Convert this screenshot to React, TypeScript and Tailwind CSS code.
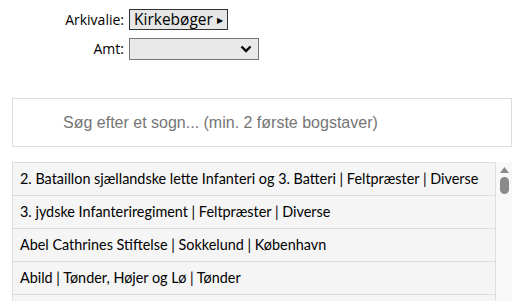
import React from 'react';

const rows = [
  '2. Bataillon sjællandske lette Infanteri og 3. Batteri | Feltpræster | Diverse',
  '3. jydske Infanteriregiment | Feltpræster | Diverse',
  'Abel Cathrines Stiftelse | Sokkelund | København',
  'Abild | Tønder, Højer og Lø | Tønder',
];

export default function App() {
  return (
    <div className="w-[521px] h-[301px] overflow-hidden bg-white font-['Open_Sans',sans-serif] text-black">
      {/* filters */}
      <div className="pt-[9px] grid grid-cols-[129px_auto] items-center gap-y-[8px]">
        <span className="text-right pr-[5px] text-[14px] leading-none">Arkivalie:</span>
        <div>
          <button className="h-[21px] px-[4px] flex items-center gap-[4px] bg-[#e6e6e6] border border-[#333] text-[15.5px] leading-none">
            Kirkebøger
            <span className="text-[8px]">▶</span>
          </button>
        </div>
        <span className="text-right pr-[5px] text-[14px] leading-none">Amt:</span>
        <div>
          <div className="w-[130px] h-[22px] bg-[#e9e9e9] border border-[#767676] flex items-center justify-end pr-[6px]">
            <svg width="12" height="8" viewBox="0 0 12 8">
              <path d="M1.5 1.5 L6 6 L10.5 1.5" fill="none" stroke="#000" strokeWidth="2.4" />
            </svg>
          </div>
        </div>
      </div>

      {/* search */}
      <div className="mt-[38px] ml-[12px] w-[500px] h-[49px] border border-[#ddd] flex items-center pl-[50px]">
        <span className="font-['Liberation_Sans',sans-serif] text-[16px] text-[#757575]">
          Søg efter et sogn... (min. 2 første bogstaver)
        </span>
      </div>

      {/* list */}
      <div className="mt-[15px] ml-[12px] w-[500px] flex border-l border-[#ddd]">
        <div className="flex-1 flex flex-col font-['Lato',sans-serif]">
          {rows.map((r) => (
            <div
              key={r}
              className="h-[33px] shrink-0 bg-[#f5f5f5] border-t border-r border-[#ddd] flex items-center pl-[7px] text-[14.4px] whitespace-nowrap"
            >
              {r}
            </div>
          ))}
          <div className="h-[33px] shrink-0 bg-[#f5f5f5] border-t border-r border-[#ddd]" />
        </div>
        <div className="w-[16px] bg-[#f8f8f8] flex flex-col items-center pt-[5px]">
          <svg width="9" height="6" viewBox="0 0 9 6">
            <path d="M0 6 L4.5 0 L9 6 Z" fill="#8a8a8a" />
          </svg>
          <div className="mt-[4px] w-[9px] h-[17px] rounded-full bg-[#8a8a8a]" />
        </div>
      </div>
    </div>
  );
}
